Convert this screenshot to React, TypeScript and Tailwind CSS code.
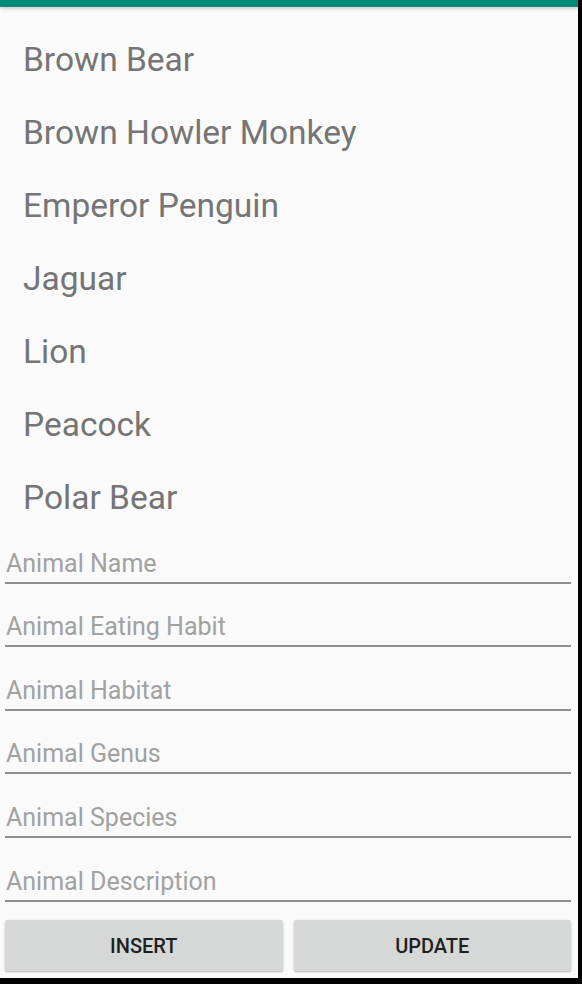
import * as React from "react"

const animals = [
  "Brown Bear",
  "Brown Howler Monkey",
  "Emperor Penguin",
  "Jaguar",
  "Lion",
  "Peacock",
  "Polar Bear",
]

const fields = [
  "Animal Name",
  "Animal Eating Habit",
  "Animal Habitat",
  "Animal Genus",
  "Animal Species",
  "Animal Description",
]

function Field({ hint }: { hint: string }) {
  return (
    <div className="flex h-[63.6px] flex-col justify-end pl-[5px] pr-[7px]">
      <div className="pb-[3px] pl-[1px] text-[25px] leading-[30px] text-[#a1a1a1]">{hint}</div>
      <div className="mb-[1px] h-[2px] bg-[#8e8e8e]" />
    </div>
  )
}

export default function App() {
  return (
    <div className="flex h-[984px] w-[582px] bg-black font-['Roboto',sans-serif]">
      <div className="flex h-[978px] w-[578px] flex-col bg-[#fafafa]">
        <div className="h-[7px] bg-[#00897b] shadow-[0_1px_4px_rgba(0,0,0,0.25)]" />

        <ul className="pt-[17px]">
          {animals.map((a) => (
            <li key={a} className="flex h-[73px] items-center pl-[23px] text-[33.5px] text-[#757575]">
              {a}
            </li>
          ))}
        </ul>

        <div className="mt-[-14px]">
          {fields.map((f) => (
            <Field key={f} hint={f} />
          ))}
        </div>

        <div className="mt-[17px] flex gap-[11px] pl-[5px] pr-[7px]">
          <button className="h-[51px] flex-1 rounded-[2px] bg-[#d6d7d7] pt-[2px] text-[20px] font-medium text-[#1f1f1f] shadow-[0_1px_2px_rgba(0,0,0,0.3)]">
            INSERT
          </button>
          <button className="h-[51px] flex-1 rounded-[2px] bg-[#d6d7d7] pt-[2px] text-[20px] font-medium text-[#1f1f1f] shadow-[0_1px_2px_rgba(0,0,0,0.3)]">
            UPDATE
          </button>
        </div>
      </div>
    </div>
  )
}
